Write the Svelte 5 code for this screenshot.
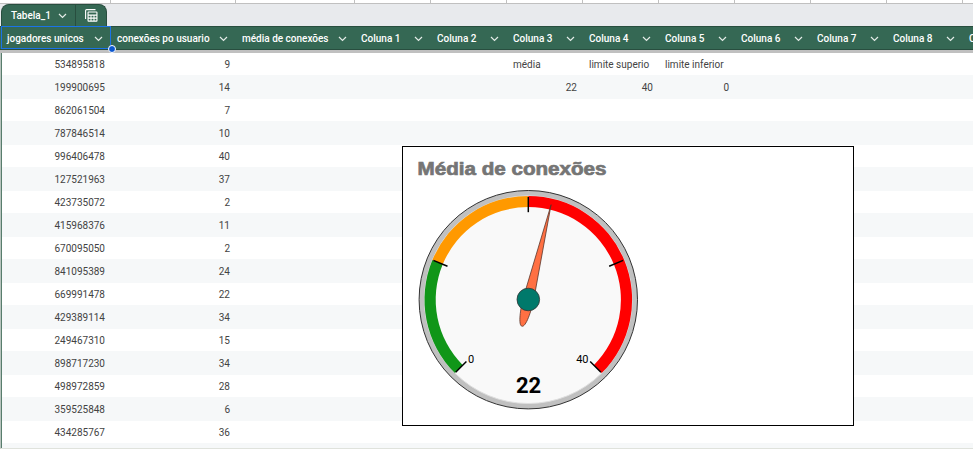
<script>
  const columns = [
    { name: 'jogadores unicos', width: 109 },
    { name: 'conexões po usuario', width: 125 },
    { name: 'média de conexões', width: 119 },
    ...Array.from({ length: 9 }, (_, i) => ({ name: `Coluna ${i + 1}`, width: 76 }))
  ];
  const template = columns.map((c) => `${c.width}px`).join(' ');

  const records = [
    [534895818, 9], [199900695, 14], [862061504, 7], [787846514, 10],
    [996406478, 40], [127521963, 37], [423735072, 2], [415968376, 11],
    [670095050, 2], [841095389, 24], [669991478, 22], [429389114, 34],
    [249467310, 15], [898717230, 34], [498972859, 28], [359525848, 6],
    [434285767, 36]
  ];
  const rows = records.map((r, i) => {
    const cells = [...r, '', '', ''];
    if (i === 0) cells.push('média', 'limite superio', 'limite inferior');
    if (i === 1) cells.push(22, 40, 0);
    return cells;
  });
  rows.push([]);

  const cx = 125.3, cy = 152.7;
  const point = (deg, r) => {
    const a = (deg * Math.PI) / 180;
    return `${(cx + r * Math.sin(a)).toFixed(2)} ${(cy - r * Math.cos(a)).toFixed(2)}`;
  };
  const band = (from, to) => {
    const large = to - from > 180 ? 1 : 0;
    return `M${point(from, 103.8)}A103.8 103.8 0 ${large} 1 ${point(to, 103.8)}L${point(to, 92.6)}A92.6 92.6 0 ${large} 0 ${point(from, 92.6)}Z`;
  };
  const ticks = [-135, -67.5, 0, 67.5, 135];
</script>

{#snippet chevron()}
  <svg class="chevron" width="9" height="6" viewBox="0 0 9 6"><path d="M1 1l3.5 3.5L8 1" /></svg>
{/snippet}

<main>
  <div class="above" style:grid-template-columns={template}>
    {#each columns as c}<i></i>{/each}
  </div>
  <div class="tabstrip">
    <div class="tab">
      <span class="tabname">Tabela_1</span>
      {@render chevron()}
      <span class="tool">
        <svg width="13" height="13" viewBox="0 0 13 13">
          <path d="M.6 10V1.6q0-1 1-1H10.500" fill="none" stroke="#fff" stroke-width="1.1" />
          <path fill="#fff" fill-rule="evenodd" d="M3.500 2.500h8q1 0 1 1v8.300q0 1-1 1h-8q-1 0-1-1V3.500q0-1 1-1zM3.600 3.600v2h7.800v-2zM3.600 6.800v1.700h1.900V6.800zM6.500 6.800v1.700h2V6.800zM9.500 6.800v1.700h1.900V6.800zM3.600 9.800v1.800h1.900V9.800zM6.500 9.800v1.800h2V9.800zM9.500 9.800v1.800h1.900V9.800z" />
        </svg>
      </span>
    </div>
  </div>
  <div class="header" style:grid-template-columns={template}>
    {#each columns as c, i}
      <div class="head" class:selected={i === 0}>
        <span>{c.name}</span>{@render chevron()}
        {#if i === 0}<b class="handle"></b>{/if}
      </div>
    {/each}
  </div>
  <div class="freeze"></div>
  <div class="body">
    {#each rows as row}
      <div class="row" style:grid-template-columns={template}>
        {#each row as cell}
          <span class:number={typeof cell === 'number'}>{cell}</span>
        {/each}
      </div>
    {/each}
  </div>

  <section class="chart">
    <svg width="450" height="278" viewBox="0 0 450 278">
      <text class="title" x="14.500" y="28" textLength="189" lengthAdjust="spacingAndGlyphs">Média de conexões</text>
      <circle {cx} {cy} r="109.200" fill="#c0c0c0" stroke="#333" stroke-width="1" />
      <circle {cx} {cy} r="103.800" fill="#f9f9f9" stroke="#e0e0e0" stroke-width="1" />
      <path d={band(-135, -67.5)} fill="#109618" />
      <path d={band(-67.5, 0)} fill="#ff9900" />
      <path d={band(0, 135)} fill="#ff0000" />
      {#each ticks as t}
        <path d="M{point(t, 102.7)}L{point(t, 87.500)}" stroke="#000" stroke-width="1.500" />
      {/each}
      <text class="limit" x="65" y="216">0</text>
      <text class="limit" x="185.500" y="216" text-anchor="end">40</text>
      <text class="value" x="125.500" y="246" text-anchor="middle">22</text>
      <path
        transform="rotate(13.5 {cx} {cy})"
        d="M125.300 55L120.100 149.700C119.600 164 121.300 180 125.300 180S131 164 130.500 149.700Z"
        fill="#ff7043" stroke="#543126" stroke-width=".7"
      />
      <circle {cx} cy="152.500" r="11.300" fill="#00796b" stroke="#333" stroke-width=".8" />
    </svg>
  </section>
</main>

<style>
  :global(body) { margin: 0; }
  main {
    position: relative;
    width: 973px;
    height: 449px;
    box-sizing: border-box;
    overflow: hidden;
    background: #fff;
    font: 10px Roboto, sans-serif;
    color: #434343;
  }
  .above { display: grid; height: 3px; padding-left: 2px; border-bottom: 1px solid #c0c0c0; }
  .above i { border-right: 1px solid #c0c0c0; }
  .tabstrip { height: 22px; padding-left: 1px; background: #e8eaed; }
  .tab {
    display: flex;
    align-items: center;
    box-sizing: border-box;
    width: 106px;
    height: 22px;
    padding-left: 9px;
    border: 1px solid #284e3f;
    border-bottom: 0;
    border-radius: 8px 8px 0 0;
    background: #356854;
    color: #fff;
    font-weight: 500;
  }
  .tabname { width: 47px; }
  .chevron { flex: none; fill: none; stroke: #e4ece8; stroke-width: 1.2; }
  .tool {
    display: flex;
    align-items: center;
    height: 100%;
    margin-left: 8px;
    padding-left: 9px;
    border-left: 1px solid #284e3f;
  }
  .header {
    display: grid;
    box-sizing: border-box;
    height: 24px;
    padding-left: 1px;
    border-top: 1px solid #284e3f;
    border-bottom: 1px solid #284e3f;
    background: #356854;
    color: #fff;
    font-weight: 500;
  }
  .head {
    position: relative;
    display: flex;
    align-items: center;
    justify-content: space-between;
    min-width: 0;
    padding: 1px 7.5px 0 7px;
    white-space: nowrap;
  }
  .head.selected { padding-left: 6px; }
  .selected::before {
    content: '';
    position: absolute;
    inset: -1px -1px 0 0;
    border: 1px solid #1a73e8;
  }
  .handle {
    position: absolute;
    z-index: 2;
    right: -6px;
    bottom: -4px;
    width: 6px;
    height: 6px;
    border: 1px solid #fff;
    border-radius: 50%;
    background: #0b57d0;
  }
  .freeze { height: 3px; background: #c0c0c0; }
  .body { height: 395px; overflow: hidden; border-bottom: 1px solid #dfe2dc; border-left: 1px solid #b8c4be; }
  .row {
    display: grid;
    box-sizing: border-box;
    height: 22px;
    border-left: 1px solid #587d6d;
    line-height: 23px;
  }
  .row:nth-child(even) { height: 24px; background: #f6f8f9; line-height: 25px; }
  .row span { padding: 0 6px 0 6px; white-space: nowrap; }
  .row .number { text-align: right; }
  .chart {
    position: absolute;
    left: 402px;
    top: 146px;
    width: 450px;
    height: 278px;
    border: 1px solid #000;
    background: #fff;
  }
  .chart svg { display: block; }
  .title { font: bold 18px 'Liberation Sans', Arial, sans-serif; fill: #757575; stroke: #757575; stroke-width: .7; }
  .limit { font: 11px Roboto, sans-serif; fill: #000; }
  .value { font: 700 22px Roboto, sans-serif; fill: #000; }
</style>
